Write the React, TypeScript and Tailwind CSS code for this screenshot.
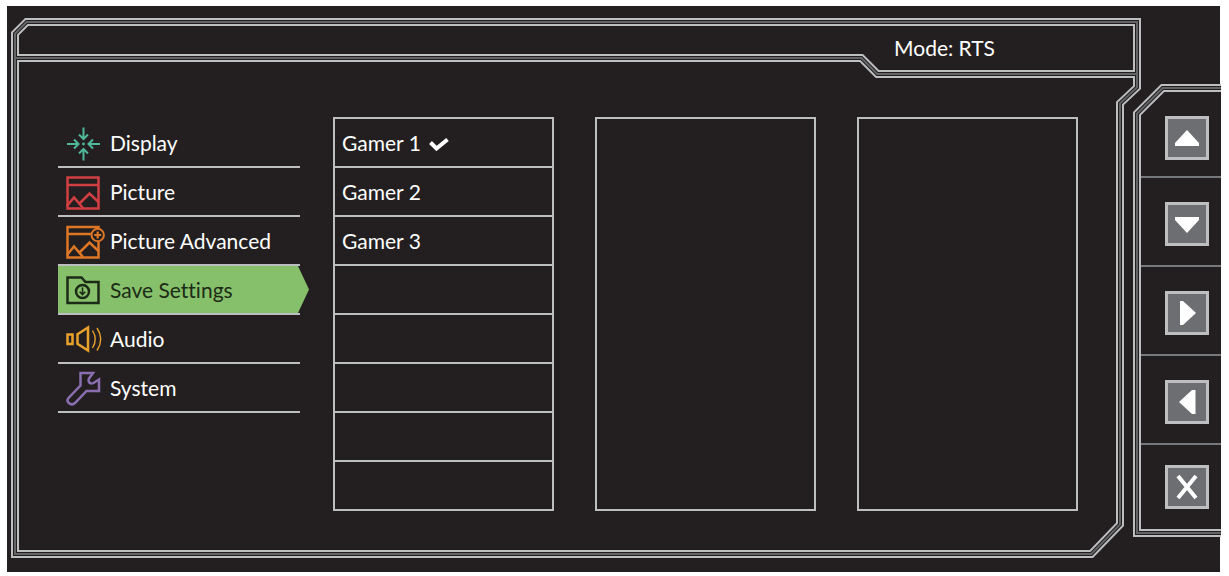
import React from 'react';

const LIGHT = '#bcbec0';
const MID = '#636466';
const BG = '#231f20';

type Point = [string, string];

const K = Math.SQRT2 - 1;
const start = (n: number) => `${n}px`;
const end = (n: number) => `calc(100% - ${n}px)`;
const polygon = (points: Point[]) =>
  `polygon(${points.map(([x, y]) => `${x} ${y}`).join(', ')})`;

/* Each outline takes the inset from the outer edge. Mitred corners move by inset * tan(22.5deg). */
const topLeft = (d: number): Point[] => [
  [start(d), start(14 + K * d)],
  [start(14 + K * d), start(d)],
];

const lowerRight = (d: number): Point[] => [
  [end(d), start(71 - K * d)],
  [end(17 + d), start(87 - K * d)],
  [end(17 + d), end(32 + K * d)],
  [end(48 + K * d), end(d)],
  [start(d), end(d)],
];

const rule = (left: number, right: number, e: number): Point[] => [
  [start(left), start(36 + e)],
  [end(278 + K * e), start(36 + e)],
  [end(262 + K * e), start(52 + e)],
  [end(right), start(52 + e)],
];

const outline = (d: number) => polygon([...topLeft(d), [end(d), start(d)], ...lowerRight(d)]);
const headerOutline = (d: number, e: number) =>
  polygon([...topLeft(d), [end(d), start(d)], ...rule(d, d, e).reverse()]);
const bodyOutline = (d: number, e: number) => polygon([...rule(d, d, e), ...lowerRight(d)]);

const mainLayers = [
  { color: LIGHT, shape: outline(0) },
  { color: BG, shape: outline(2) },
  { color: MID, shape: outline(3) },
  { color: BG, shape: outline(5) },
  { color: MID, shape: polygon([...rule(4, 4, 3), ...rule(4, 4, 5).reverse()]) },
  { color: LIGHT, shape: headerOutline(6, 2) },
  { color: BG, shape: headerOutline(8, 0) },
  { color: LIGHT, shape: bodyOutline(6, 6) },
  { color: BG, shape: bodyOutline(8, 8) },
];

const sideOutline = (d: number) =>
  polygon([
    [start(d), start(28 + K * d)],
    [start(28 + K * d), start(d)],
    ['100%', start(d)],
    ['100%', end(d)],
    [start(d), end(d)],
  ]);

const sideLayers = [
  { color: LIGHT, shape: sideOutline(0) },
  { color: BG, shape: sideOutline(2) },
  { color: MID, shape: sideOutline(3) },
  { color: BG, shape: sideOutline(5) },
  { color: LIGHT, shape: sideOutline(6) },
  { color: BG, shape: sideOutline(8) },
];

function Frame({ layers }: { layers: { color: string; shape: string }[] }) {
  return (
    <div aria-hidden="true" className="absolute inset-0">
      {layers.map((layer, i) => (
        <div
          key={i}
          className="absolute inset-0"
          style={{ backgroundColor: layer.color, clipPath: layer.shape }}
        />
      ))}
    </div>
  );
}

function Icon({ children, color }: { children: React.ReactNode; color: string }) {
  return (
    <svg
      aria-hidden="true"
      className="h-9 w-[42px] shrink-0"
      viewBox="0 0 42 36"
      fill="none"
      stroke={color}
      strokeWidth="2.5"
    >
      {children}
    </svg>
  );
}

const DisplayIcon = () => (
  <Icon color="#4fb898">
    <g strokeWidth="2">
      <path d="M19.500 2.500v11M15 9.500l4.500 4.500 4.500-4.500" />
      <path d="M19.500 35.500V24.500M15 28.500l4.500-4.500 4.500 4.500" />
      <path d="M3 19h11M10 14.500l4.500 4.500-4.500 4.500" />
      <path d="M36 19H25M29 14.500l-4.500 4.500 4.500 4.500" />
    </g>
    <circle cx="19.500" cy="19" r="1.400" fill="#4fb898" stroke="none" />
  </Icon>
);

const PictureIcon = () => (
  <Icon color="#d23f42">
    <path d="M3.500 3.500h31v31h-31zM3 11h32" />
    <path d="M3 32l7-8.500L19 34M15 30l10.500-10.500L35 28.500" />
  </Icon>
);

const PictureAdvancedIcon = () => (
  <Icon color="#dd7726">
    <path d="M3.500 4h31v30.500h-31zM3 11h32" />
    <path d="M3 32l7-8.500L19 34M15 30l10.500-10.500L35 28.500" />
    <circle cx="33.700" cy="12" r="7" fill={BG} stroke="none" />
    <circle cx="33.700" cy="12" r="6.200" strokeWidth="2" />
    <path d="M33.700 8.500v7M30.200 12h7" strokeWidth="2.200" />
  </Icon>
);

const SaveIcon = () => (
  <Icon color="#1c2b17">
    <path d="M3.500 5.500h14l4 4.500h13v21h-31z" />
    <circle cx="18.500" cy="19.500" r="6.500" />
    <path d="M18.500 15.500v6.500M15.700 19.700l2.800 2.800 2.800-2.800" strokeWidth="1.600" />
  </Icon>
);

const AudioIcon = () => (
  <Icon color="#e9a22b">
    <path d="M3.500 13.500h5v9.500h-5zM13.500 13.200L24 6.500v23L13.500 22.800z" />
    <path d="M28.500 9.500q5.500 8.700 0 17.500M33 7q7.500 11.200 0 22.500" strokeWidth="1.400" />
  </Icon>
);

const SystemIcon = () => (
  <Icon color="#8a6fb0">
    <path d="M16.500 3h12.500l-4 5.500c-1.500 4 1.500 6 4.500 4.500l5.500-3.500v11.500H22.500L11 33c-4 3.500-9.500-1-6.500-5L16.500 15.500z" />
  </Icon>
);

const menu = [
  { label: 'Display', icon: DisplayIcon },
  { label: 'Picture', icon: PictureIcon },
  { label: 'Picture Advanced', icon: PictureAdvancedIcon },
  { label: 'Save Settings', icon: SaveIcon, active: true },
  { label: 'Audio', icon: AudioIcon },
  { label: 'System', icon: SystemIcon },
];

const presets = ['Gamer 1', 'Gamer 2', 'Gamer 3', '', '', '', '', ''];

const controls = [
  { label: 'Up', path: 'M20 12L32 25v3H8v-3z' },
  { label: 'Down', path: 'M20 29L8 16v-3h24v3z' },
  { label: 'Right', path: 'M29 20L16 32h-3V8h3z' },
  { label: 'Left', path: 'M12 20L25 32h3.500V8H25z' },
  { label: 'Close', path: 'M11 9l18 22M29 9l-18 22', cross: true },
];

export default function App() {
  return (
    <div className="min-h-screen bg-white pt-[6px] pr-[9px] pb-1 pl-[7px] font-['Lato',sans-serif] text-[21px] leading-6 text-white [font-variant-ligatures:none]">
      <div className="flex bg-[#231f20] pt-3 pb-[14px] pl-1">
        <main className="relative min-w-0 flex-1">
          <Frame layers={mainLayers} />
          <header className="relative flex h-[60px] items-center justify-end pr-[146px]">
            <h1>Mode: RTS</h1>
          </header>
          <div className="relative flex pt-[39px] pr-[63px] pb-[47px] pl-[47px]">
            <nav aria-label="Settings" className="w-[242px] shrink-0 pt-[2px]">
              <ul>
                {menu.map(({ label, icon: ItemIcon, active }) => (
                  <li key={label} className="border-b-2 border-[#bcbec0]">
                    {active ? (
                      <button
                        aria-current="page"
                        className="flex h-[47px] w-[251px] items-center gap-1 bg-[#86c06a] pl-[6px] text-left text-[#1c2b17] [clip-path:polygon(0_0,calc(100%-11px)_0,100%_50%,calc(100%-11px)_100%,0_100%)]"
                      >
                        <ItemIcon />
                        {label}
                      </button>
                    ) : (
                      <button className="flex h-[47px] w-full items-center gap-1 pl-[6px] text-left">
                        <ItemIcon />
                        {label}
                      </button>
                    )}
                  </li>
                ))}
              </ul>
            </nav>
            <div className="ml-[33px] flex min-w-0 flex-1 gap-[41px]">
              <ul className="flex-1 border-2 border-b-0 border-[#bcbec0]">
                {presets.map((name, i) => (
                  <li key={i} className="h-[49px] border-b-2 border-[#bcbec0]">
                    {name && (
                      <button className="flex h-full w-full items-center gap-2 pl-[7px] text-left">
                        {name}
                        {i === 0 && (
                          <svg
                            aria-label="Selected"
                            className="h-4 w-5"
                            viewBox="0 0 20 16"
                            fill="none"
                            stroke="currentColor"
                            strokeWidth="4"
                          >
                            <path d="M1.500 7.500l6 6 11-9" />
                          </svg>
                        )}
                      </button>
                    )}
                  </li>
                ))}
              </ul>
              <section aria-label="Options" className="flex-1 border-2 border-[#bcbec0]" />
              <section aria-label="Values" className="flex-1 border-2 border-[#bcbec0]" />
            </div>
          </div>
        </main>
        <aside className="relative mt-[66px] mb-[21px] -ml-2 -mr-px flex w-[88px] shrink-0 flex-col py-2 pl-2">
          <Frame layers={sideLayers} />
          <ul className="relative flex flex-1 flex-col">
            {controls.map(({ label, path, cross }) => (
              <li
                key={label}
                className="flex h-[89px] items-center border-[#77787b] pt-1 pl-6 first:h-[86px] first:pt-2 last:h-auto last:flex-1 last:pt-0 not-last:border-b-2"
              >
                <button
                  aria-label={label}
                  className="size-11 border-[3px] border-[#bcbec0] bg-[#6d6e71]"
                >
                  <svg
                    aria-hidden="true"
                    className="size-[38px]"
                    viewBox="1 1 38 38"
                    fill={cross ? 'none' : 'white'}
                    stroke={cross ? 'white' : 'none'}
                    strokeWidth="4"
                  >
                    <path d={path} />
                  </svg>
                </button>
              </li>
            ))}
          </ul>
        </aside>
      </div>
    </div>
  );
}
